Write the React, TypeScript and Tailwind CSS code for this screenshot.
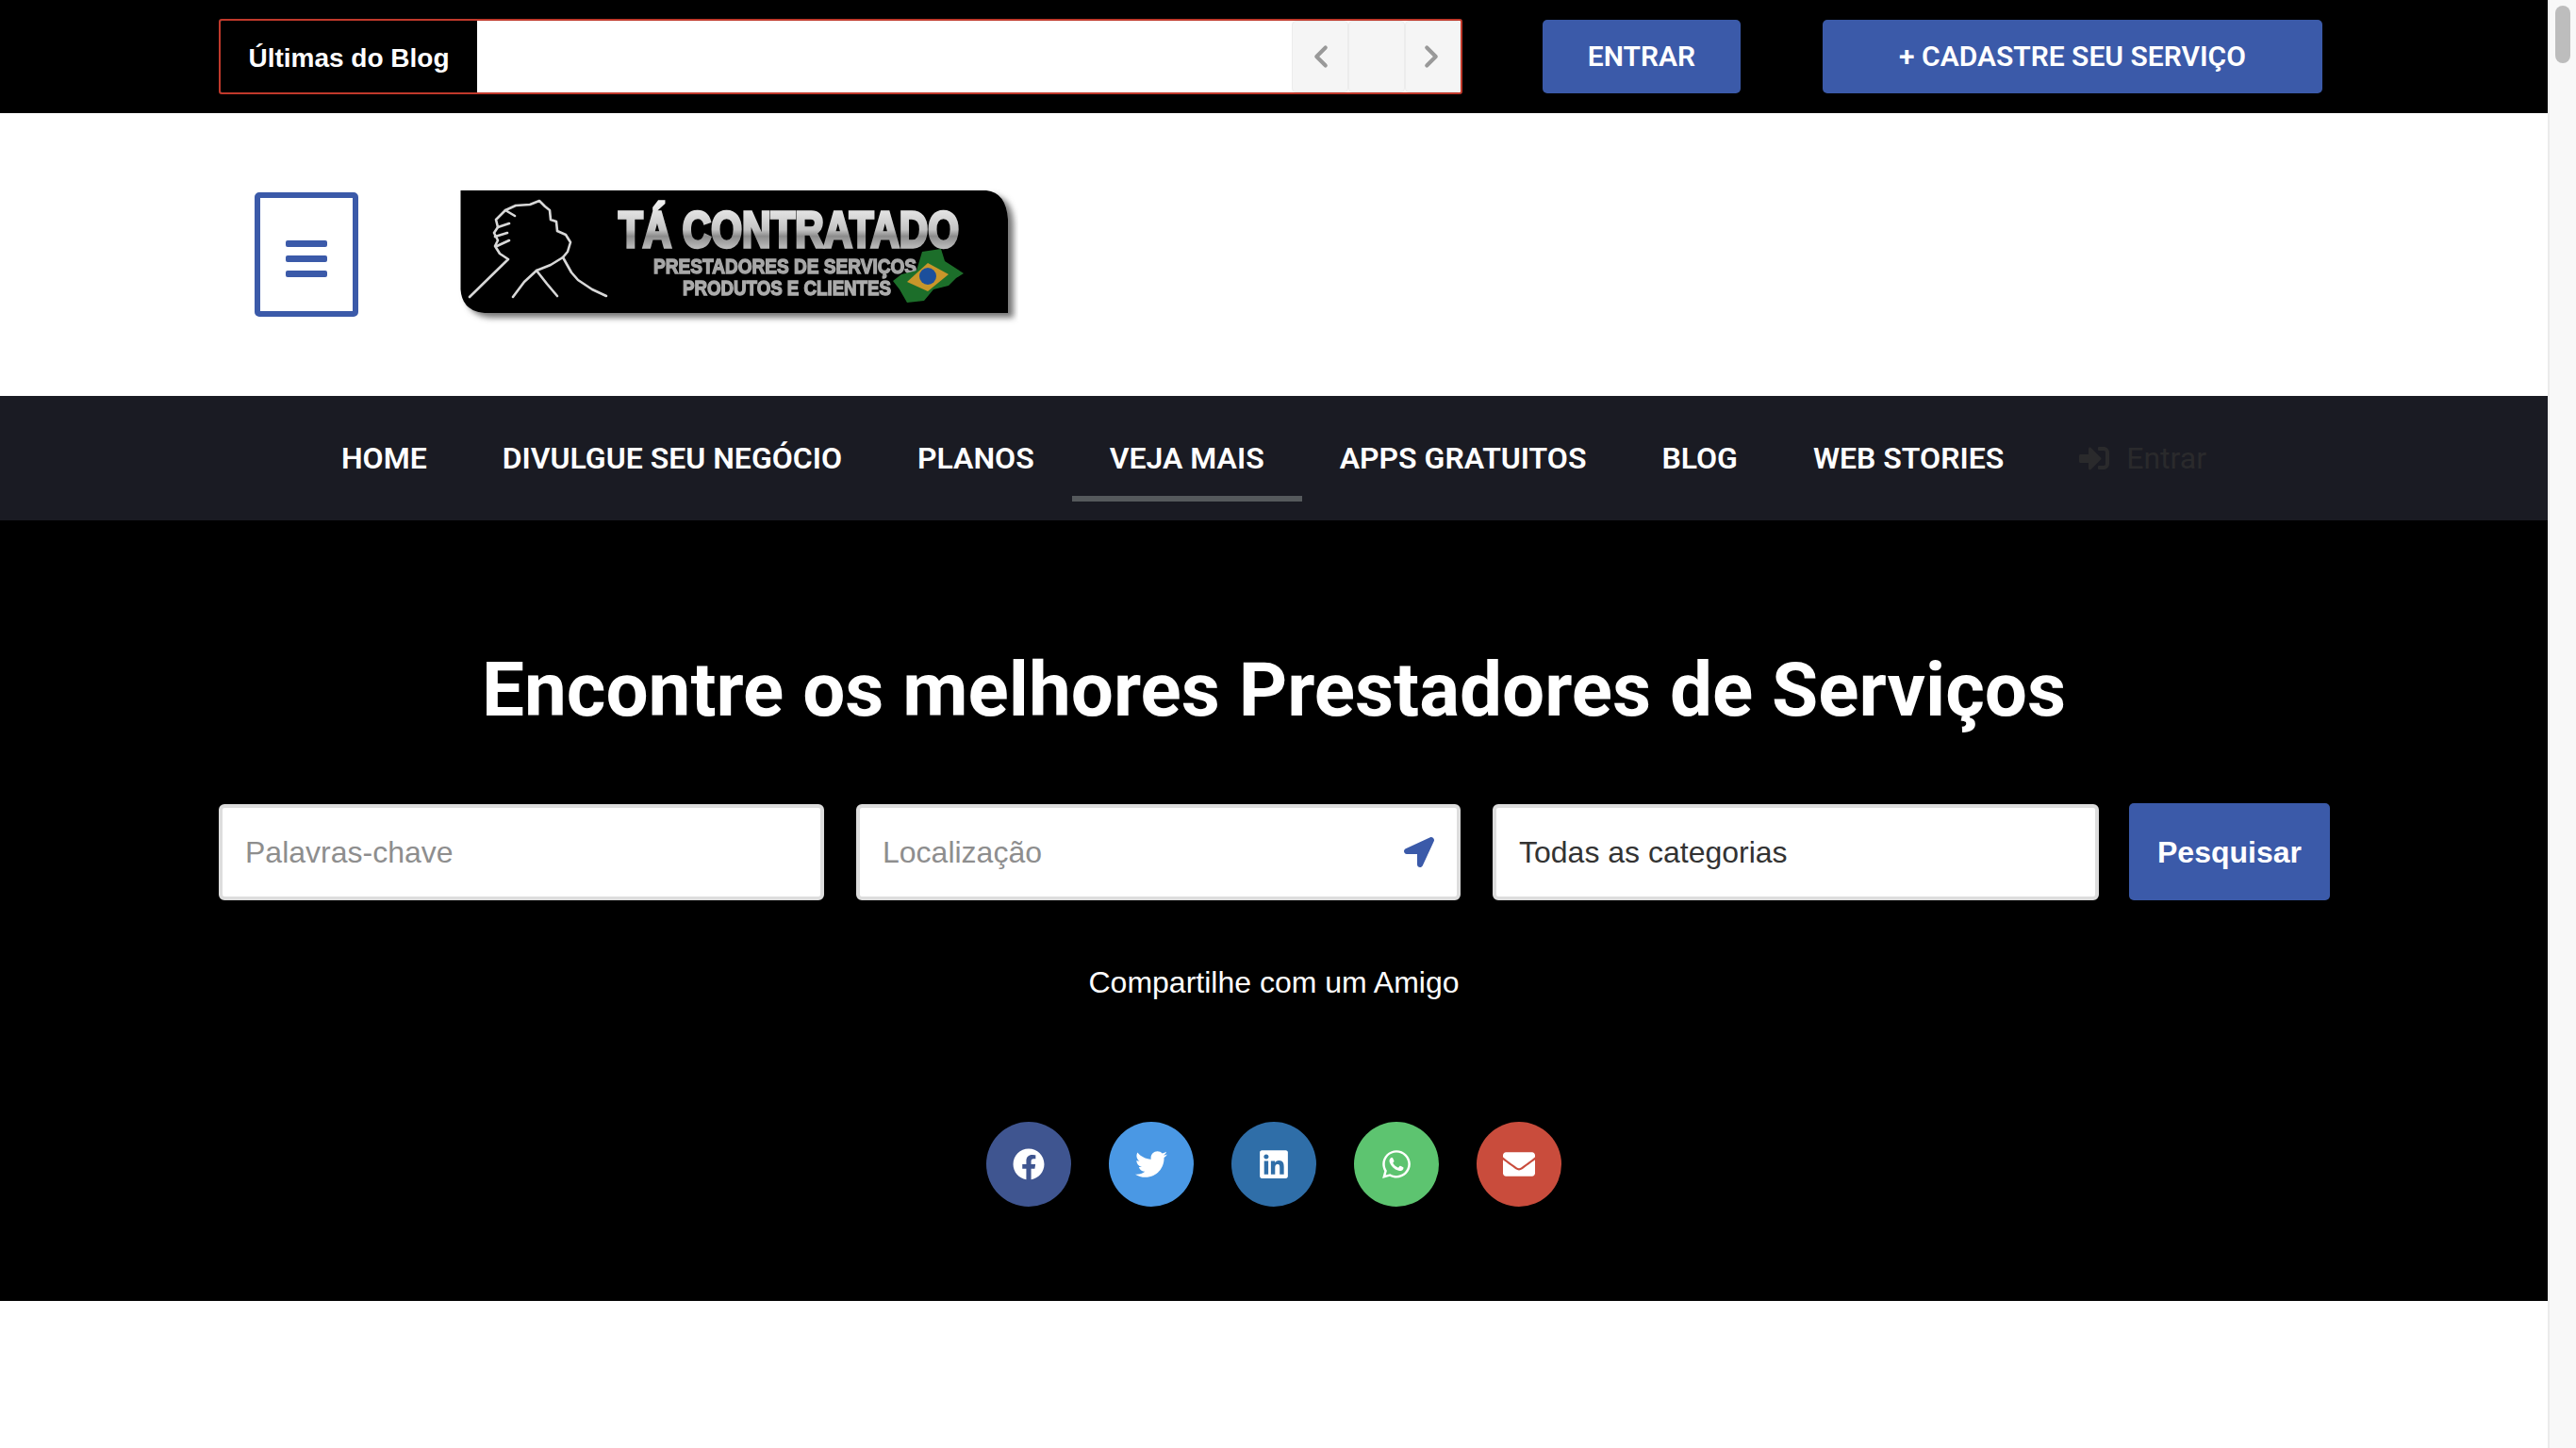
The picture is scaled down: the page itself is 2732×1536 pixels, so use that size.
import {
  FaEnvelope,
  FaFacebook,
  FaLinkedin,
  FaLocationArrow,
  FaSignInAlt,
  FaTwitter,
  FaWhatsapp,
} from "react-icons/fa";
import { ChevronLeft, ChevronRight } from "lucide-react";

const navItems = [
  { label: "HOME", active: false },
  { label: "DIVULGUE SEU NEGÓCIO", active: false },
  { label: "PLANOS", active: false },
  { label: "VEJA MAIS", active: true },
  { label: "APPS GRATUITOS", active: false },
  { label: "BLOG", active: false },
  { label: "WEB STORIES", active: false },
];

const socials = [
  { name: "facebook", icon: FaFacebook, color: "bg-[#3f5590]" },
  { name: "twitter", icon: FaTwitter, color: "bg-[#4a98e4]" },
  { name: "linkedin", icon: FaLinkedin, color: "bg-[#2f6ea8]" },
  { name: "whatsapp", icon: FaWhatsapp, color: "bg-[#5dc470]" },
  { name: "email", icon: FaEnvelope, color: "bg-[#c94c3c]" },
];

function Logo() {
  return (
    <svg width="600" height="150" viewBox="0 0 600 150" className="block">
      <defs>
        <linearGradient id="chrome" x1="0" y1="0" x2="0" y2="1">
          <stop offset="0" stopColor="#f2f2f2" />
          <stop offset="0.5" stopColor="#c4c4c4" />
          <stop offset="0.62" stopColor="#8c8c8c" />
          <stop offset="1" stopColor="#e0e0e0" />
        </linearGradient>
        <filter id="soft">
          <feGaussianBlur stdDeviation="0.7" />
        </filter>
        <filter id="shadow">
          <feGaussianBlur stdDeviation="3" />
        </filter>
      </defs>
      {/* plate */}
      <path
        d="M14 12 H572 Q594 14 595 43 V142 H40 Q16 140 14 117 Z"
        fill="#777"
        filter="url(#shadow)"
      />
      <path d="M8.5 7 H566 Q587 9 589 38 V137 H34 Q10 135 8.5 112 Z" fill="#000" />
      {/* arm wrestling hands */}
      <g filter="url(#soft)" fill="none" stroke="#d8d8d8" strokeWidth="2.6" strokeLinecap="round" strokeLinejoin="round">
        <path d="M18 120 L59 80 L50 74 L45 66 L48 60 L44 52 L48 46 L46 38 L56 28 L67 23 L82 22 L92 18 L98 24 L103 28 L104 38 L110 40 L111 50 L120 54 L125 62 L122 72 L117 78 L104 86 L89 92 L76 104 L64 120" />
        <path d="M117 78 L126 94 L133 102 L148 112 L163 119" />
        <path d="M89 92 L100 106 L111 119" />
        <path d="M48 46 L60 42 M45 56 L58 52 M47 66 L60 60 M56 28 L66 34" />
      </g>
      {/* wording */}
      <g filter="url(#soft)" fontFamily="'Liberation Sans', sans-serif" fontWeight="700">
        <text x="176" y="67" fontSize="53" textLength="361" lengthAdjust="spacingAndGlyphs" fill="url(#chrome)" stroke="url(#chrome)" strokeWidth="3.5">
          TÁ CONTRATADO
        </text>
        <text x="213" y="95" fontSize="22" textLength="279" lengthAdjust="spacingAndGlyphs" fill="#a8a8a8" stroke="#a8a8a8" strokeWidth="1.4">
          PRESTADORES DE SERVIÇOS
        </text>
        <text x="244" y="118" fontSize="22" textLength="221" lengthAdjust="spacingAndGlyphs" fill="#acacac" stroke="#acacac" strokeWidth="1.4">
          PRODUTOS E CLIENTES
        </text>
      </g>
      {/* flag */}
      <g filter="url(#soft)">
        <path d="M467 103 L476 96 L492 92 L498 72 L518 69 L522 82 L542 95 L534 100 L526 108 L510 112 L500 124 L482 126 L474 112 Z" fill="#1f6e2a" />
        <path d="M482 104 L504 84 L526 96 L504 114 Z" fill="#c9962a" />
        <circle cx="504" cy="98" r="9" fill="#1d4f9c" />
      </g>
    </svg>
  );
}

export default function App() {
  return (
    <div className="flex h-[1536px] overflow-hidden bg-white font-['Liberation_Sans',sans-serif]">
      <div className="w-[2702px] shrink-0">
        {/* Top bar */}
        <div className="flex h-[120px] items-center bg-black pl-[232px]">
          <div className="flex h-20 w-[1319px] overflow-hidden rounded-[3px] border-2 border-[#c0392b] bg-white">
            <div className="flex w-[272px] items-center justify-center bg-black pt-[3px] text-[28px] font-bold text-white">
              Últimas do Blog
            </div>
            <div className="flex-1" />
            <div className="flex w-[60px] items-center justify-center rounded-[4px] border border-[#ececec] bg-[#f5f5f5] pl-[2px] text-[#999]">
              <ChevronLeft size={38} strokeWidth={2.6} />
            </div>
            <div className="w-[60px] rounded-[4px] border border-[#ececec] bg-[#f5f5f5]" />
            <div className="flex w-[59px] items-center justify-center rounded-[4px] border border-[#ececec] bg-[#f5f5f5] pr-[3px] text-[#999]">
              <ChevronRight size={38} strokeWidth={2.6} />
            </div>
          </div>
          <a className="ml-[85px] flex h-[78px] w-[210px] items-center justify-center rounded-[5px] bg-[#3b5aa9] pb-[2px] font-['Roboto',sans-serif] text-[30px] font-semibold text-white">
            ENTRAR
          </a>
          <a className="ml-[87px] flex h-[78px] w-[530px] items-center justify-center rounded-[5px] bg-[#3b5aa9] pb-[2px] font-['Roboto',sans-serif] text-[30px] font-semibold text-white">
            + CADASTRE SEU SERVIÇO
          </a>
        </div>

        {/* Header */}
        <div className="flex h-[300px] items-center bg-white pl-[270px]">
          <button className="flex h-[132px] w-[110px] flex-col items-center justify-center gap-[9px] rounded-[5px] border-[6px] border-[#3b5aa9] pt-2">
            <span className="h-[7px] w-[44px] rounded-[2px] bg-[#3b5aa9]" />
            <span className="h-[7px] w-[44px] rounded-[2px] bg-[#3b5aa9]" />
            <span className="h-[7px] w-[44px] rounded-[2px] bg-[#3b5aa9]" />
          </button>
          <div className="ml-[100px]">
            <Logo />
          </div>
        </div>

        {/* Nav */}
        <nav className="flex h-[132px] items-start justify-center bg-[#1a1b23] font-['Roboto',sans-serif]">
          {navItems.map((item) => (
            <a
              key={item.label}
              className={`flex h-[112px] items-center border-b-[6px] px-10 pt-[26px] text-[32px] font-semibold text-white ${
                item.active ? "border-[#55595c]" : "border-transparent"
              }`}
            >
              {item.label}
            </a>
          ))}
          <a className="flex h-[112px] items-center gap-[18px] border-b-[6px] border-transparent px-10 pt-[26px] text-[32px] text-[#2a2a2c]">
            <FaSignInAlt size={32} />
            Entrar
          </a>
        </nav>

        {/* Search hero */}
        <section className="h-[828px] bg-black">
          <h1 className="pt-[132px] text-center font-['Roboto',sans-serif] text-[80px] leading-[1.2] font-bold text-white">
            Encontre os melhores Prestadores de Serviços
          </h1>
          <div className="mt-[73px] flex items-stretch gap-[34px] pl-[232px]">
            <div className="flex h-[102px] w-[642px] items-center rounded-[6px] border-4 border-[#ddd] bg-white px-6 text-[32px] text-[#8e8e8e]">
              Palavras-chave
            </div>
            <div className="flex h-[102px] w-[641px] items-center justify-between rounded-[6px] border-4 border-[#ddd] bg-white px-6 text-[32px] text-[#8e8e8e]">
              Localização
              <FaLocationArrow size={32} className="text-[#3b5aa9]" />
            </div>
            <div className="flex h-[102px] w-[643px] items-center rounded-[6px] border-4 border-[#ddd] bg-white px-6 text-[32px] text-[#333]">
              Todas as categorias
            </div>
            <button className="-mt-px -ml-[2px] h-[103px] w-[213px] rounded-[5px] bg-[#3b5aa9] text-[32px] font-bold text-white">
              Pesquisar
            </button>
          </div>
          <p className="mt-[67px] text-center text-[32px] leading-[40px] text-white">Compartilhe com um Amigo</p>
          <div className="mt-[128px] flex justify-center gap-10">
            {socials.map((s) => (
              <a key={s.name} className={`flex h-[90px] w-[90px] items-center justify-center rounded-full text-white ${s.color}`}>
                <s.icon size={34} />
              </a>
            ))}
          </div>
        </section>
      </div>

      {/* Scrollbar */}
      <div className="w-[30px] shrink-0 border-l-2 border-[#ebebeb] bg-[#f8f8f8] pt-[6px] pl-[6px]">
        <div className="h-[61px] w-4 rounded-full bg-[#bdbdbd]" />
      </div>
    </div>
  );
}
